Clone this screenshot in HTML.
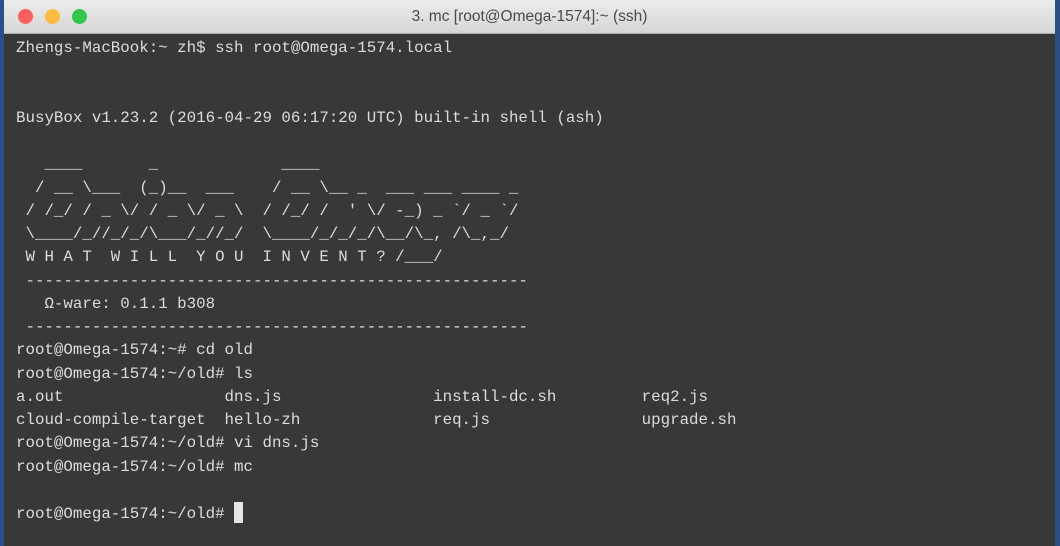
<!DOCTYPE html>
<html><head><meta charset="utf-8"><style>
html,body{margin:0;padding:0;width:1060px;height:546px;overflow:hidden;background:#2a4f8a;}
.win{position:absolute;left:4px;top:0;width:1051px;height:546px;background:#383838;}
.tb{position:absolute;left:0;top:0;width:100%;height:33px;background:linear-gradient(#ececec,#d6d6d6);border-bottom:1px solid #b0b0b0;}
.dot{position:absolute;top:9px;width:15px;height:15px;border-radius:50%;}
.title{position:absolute;left:0;right:0;top:8px;text-align:center;font:15.5px "Liberation Sans",sans-serif;color:#4a4a4a;}
pre{position:absolute;left:12px;top:37px;margin:0;font:15.8px/23.25px "Liberation Mono","DejaVu Sans Mono",monospace;color:#dcdcdc;white-space:pre;}
.cur{display:inline-block;width:9px;height:21px;background:#e6e6e6;vertical-align:-5px;}
</style></head><body>
<div class="win">
<div class="tb">
<div class="dot" style="left:14px;background:#fc605c"></div>
<div class="dot" style="left:41px;background:#fdbc40"></div>
<div class="dot" style="left:68px;background:#34c84a"></div>
<div class="title">3. mc [root@Omega-1574]:~ (ssh)</div>
</div>
<pre>Zhengs-MacBook:~ zh$ ssh root@Omega-1574.local


BusyBox v1.23.2 (2016-04-29 06:17:20 UTC) built-in shell (ash)

   ____       _             ____
  / __ \___  (_)__  ___    / __ \__ _  ___ ___ ____ _
 / /_/ / _ \/ / _ \/ _ \  / /_/ /  ' \/ -_) _ `/ _ `/
 \____/_//_/_/\___/_//_/  \____/_/_/_/\__/\_, /\_,_/
 W H A T  W I L L  Y O U  I N V E N T ? /___/
 -----------------------------------------------------
   Ω-ware: 0.1.1 b308
 -----------------------------------------------------
root@Omega-1574:~# cd old
root@Omega-1574:~/old# ls
a.out                 dns.js                install-dc.sh         req2.js
cloud-compile-target  hello-zh              req.js                upgrade.sh
root@Omega-1574:~/old# vi dns.js
root@Omega-1574:~/old# mc

root@Omega-1574:~/old# <span class="cur"></span></pre>
</div>
</body></html>
